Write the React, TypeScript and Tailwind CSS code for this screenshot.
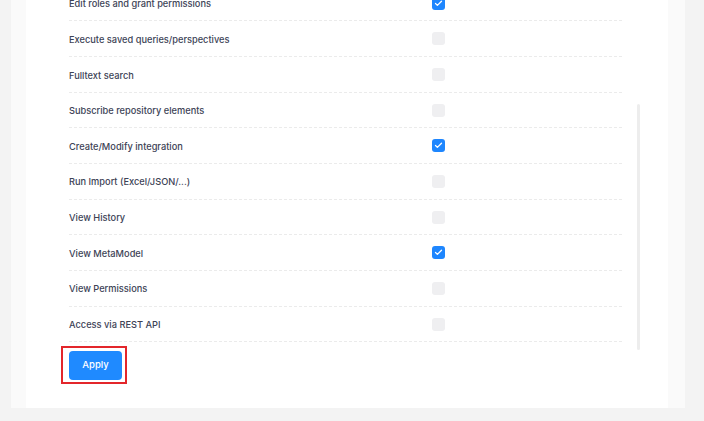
import { Check } from 'lucide-react';

interface Permission {
  label: string;
  checked: boolean;
}

const permissions: Permission[] = [
  { label: 'Edit roles and grant permissions', checked: true },
  { label: 'Execute saved queries/perspectives', checked: false },
  { label: 'Fulltext search', checked: false },
  { label: 'Subscribe repository elements', checked: false },
  { label: 'Create/Modify integration', checked: true },
  { label: 'Run Import (Excel/JSON/...)', checked: false },
  { label: 'View History', checked: false },
  { label: 'View MetaModel', checked: true },
  { label: 'View Permissions', checked: false },
  { label: 'Access via REST API', checked: false },
];

function Checkbox({ checked }: { checked: boolean }) {
  return checked ? (
    <span className="flex h-[13px] w-[13px] items-center justify-center rounded-[3px] bg-[#1e86fe]">
      <Check className="h-[9px] w-[9px] text-white" strokeWidth={3.5} />
    </span>
  ) : (
    <span className="block h-[13px] w-[13px] rounded-[3px] bg-[#efeff1]" />
  );
}

export default function App() {
  return (
    <div
      className="flex h-[421px] w-full flex-col justify-end overflow-hidden bg-[#f3f3f3] pb-[13px] pl-[11px] pr-[19px]"
      style={{ fontFamily: 'Inter, "Liberation Sans", sans-serif' }}
    >
      <div className="bg-[#fafafa] px-[15px] pr-[17px]">
        <div className="bg-white pb-[28px] pl-[43px]">
          <div className="relative w-[571px] pb-[8px]">
            {permissions.map((p) => (
              <div
                key={p.label}
                className="flex h-[35.67px] w-[553px] items-center border-b border-dashed border-[#ebebeb]"
              >
                <span className="w-[363px] pt-[2px] text-[9.25px] font-medium text-[#3d4356]">{p.label}</span>
                <Checkbox checked={p.checked} />
              </div>
            ))}
            <div className="absolute bottom-0 right-0 h-[246px] w-[3px] rounded-full bg-[#ededed]" />
          </div>

          <div className="relative w-fit">
            <button className="h-[29px] w-[53px] rounded-[4px] bg-[#1f8aff] text-[9.5px] font-medium text-white">
              Apply
            </button>
            <div className="absolute -left-[8px] -top-[4px] h-[38px] w-[66px] border-2 border-[#e3262b]" />
          </div>
        </div>
      </div>
    </div>
  );
}
